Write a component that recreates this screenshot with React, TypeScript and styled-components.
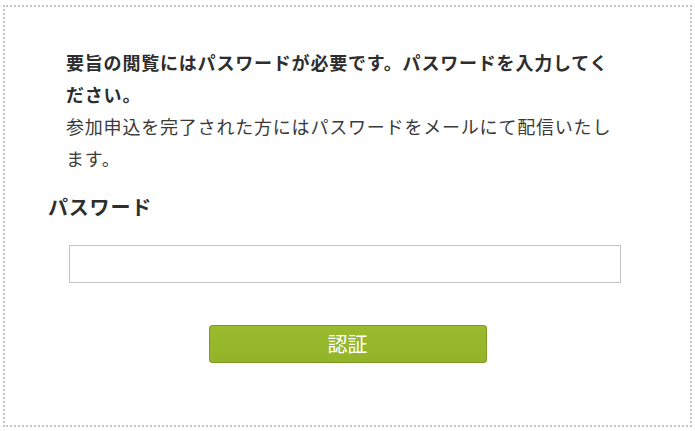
import React, { useState } from 'react';
import styled, { createGlobalStyle } from 'styled-components';

const GlobalStyle = createGlobalStyle`
  html, body {
    margin: 0;
    padding: 0;
    background: #ffffff;
  }
  body {
    font-family: "Noto Sans CJK JP", "Noto Sans", sans-serif;
    color: #333333;
  }
`;

const Frame = styled.div`
  margin: 5px 3px 0 3px;
  border: 2px dotted #c4c4c4;
  padding: 39px 43px 62px 43px;
`;

const Message = styled.div`
  margin-left: 18px;
  max-width: 552px;
  font-size: 18px;
  line-height: 32px;
  letter-spacing: 0.8px;
`;

const Lead = styled.p`
  margin: 0;
  font-weight: 700;
  color: #2e2e2e;
`;

const Note = styled.p`
  margin: 0;
  font-weight: 400;
  color: #3a3a3a;
`;

const Label = styled.h2`
  margin: 18px 0 0 0;
  font-size: 20px;
  line-height: 30px;
  font-weight: 700;
  letter-spacing: 0.8px;
  color: #2e2e2e;
`;

const Field = styled.input`
  display: block;
  box-sizing: border-box;
  margin: 23px 0 0 21px;
  width: 552px;
  height: 38px;
  border: 1px solid #c2c2c2;
  border-radius: 0;
  padding: 0 10px;
  font-size: 16px;
  outline: none;
`;

const Actions = styled.div`
  display: flex;
  justify-content: center;
  margin-top: 42px;
`;

const Submit = styled.button`
  box-sizing: border-box;
  width: 278px;
  height: 38px;
  border: 1px solid #7c9a1f;
  border-radius: 3px;
  background: linear-gradient(#9abb2e, #93b428);
  color: #ffffff;
  font-family: "Noto Sans CJK JP", sans-serif;
  font-size: 20px;
  line-height: 1;
  cursor: pointer;
`;

export default function App() {
  const [password, setPassword] = useState('');

  return (
    <>
      <GlobalStyle />
      <Frame>
        <Message>
          <Lead>要旨の閲覧にはパスワードが必要です。パスワードを入力してください。</Lead>
          <Note>参加申込を完了された方にはパスワードをメールにて配信いたします。</Note>
        </Message>
        <Label>パスワード</Label>
        <Field
          type="password"
          value={password}
          onChange={e => setPassword(e.target.value)}
        />
        <Actions>
          <Submit type="button">認証</Submit>
        </Actions>
      </Frame>
    </>
  );
}
